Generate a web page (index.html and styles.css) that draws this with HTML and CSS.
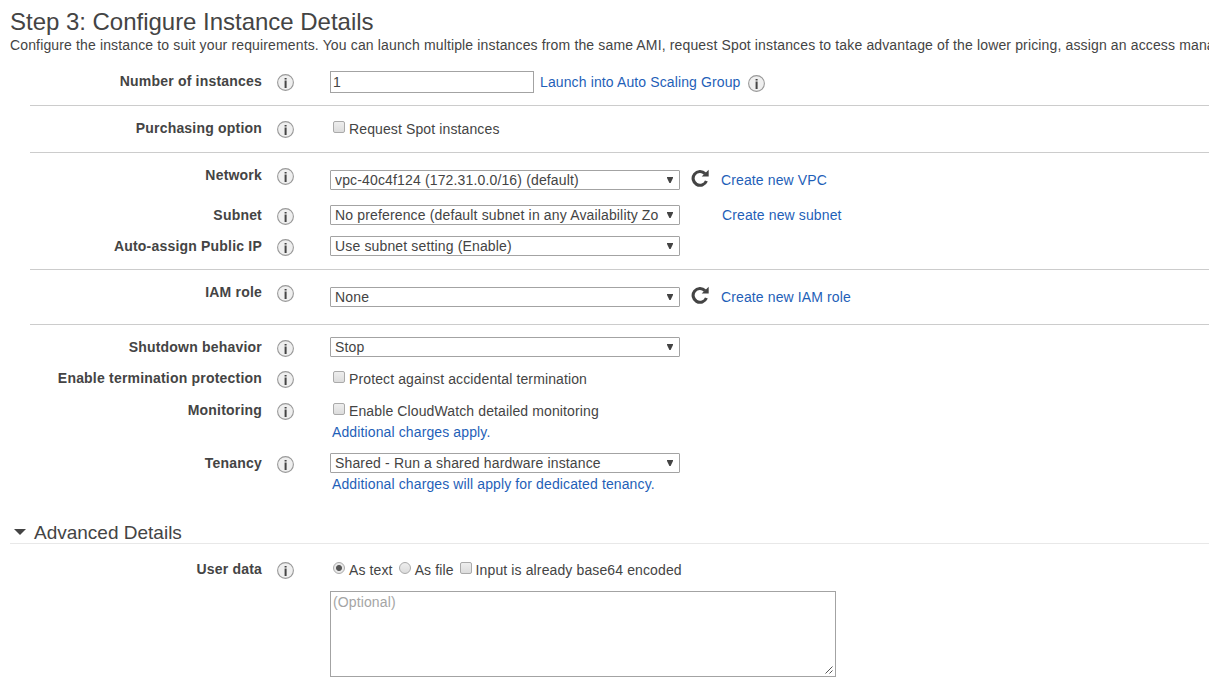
FILE: index.html
```
<!DOCTYPE html>
<html lang="en">
<head>
<meta charset="utf-8">
<title>Step 3: Configure Instance Details</title>
<link rel="stylesheet" href="styles.css">
</head>
<body>
<svg class="defs" width="0" height="0">
  <defs>
    <symbol id="info" viewBox="0 0 17 17"><circle cx="8.5" cy="8.5" r="7.9" fill="#efefef" stroke="#999" stroke-width="1.1"/><path d="M7.6 4h2v1.6h-2zM7.6 6.6h2V14h-2z" fill="#444"/></symbol>
    <symbol id="refresh" viewBox="0 0 18 18"><path d="M14 4.6A6.9 6.9 0 1 0 15.4 12" fill="none" stroke="#444" stroke-width="3.1"/><path d="M17.7 .8v6.7h-7z" fill="#444"/></symbol>
    <symbol id="arrow" viewBox="0 0 6 6"><path d="M0 0h6v1L3.6 6H2.4L0 1z" fill="#444"/></symbol>
  </defs>
</svg>
<main class="page">
  <h1 class="title">Step 3: Configure Instance Details</h1>
  <p class="intro">Configure the instance to suit your requirements. You can launch multiple instances from the same AMI, request Spot instances to take advantage of the lower pricing, assign an access mana</p>

  <section class="group">
    <div class="row h35">
      <div class="label">Number of instances</div><svg class="info"><use href="#info"/></svg>
      <div class="control line tight"><input class="number" type="text" value="1"><a class="link launch">Launch into Auto Scaling Group</a><svg class="info low"><use href="#info"/></svg></div>
    </div>
  </section>
  <section class="group">
    <div class="row h35">
      <div class="label">Purchasing option</div><svg class="info"><use href="#info"/></svg>
      <label class="control check"><input type="checkbox" class="box">Request Spot instances</label>
    </div>
  </section>
  <section class="group">
    <div class="row h40">
      <div class="label">Network</div><svg class="info"><use href="#info"/></svg>
      <div class="control line lowered"><div class="select"><span class="value">vpc-40c4f124 (172.31.0.0/16) (default)</span><svg class="arrow"><use href="#arrow"/></svg></div><svg class="refresh"><use href="#refresh"/></svg><a class="link">Create new VPC</a></div>
    </div>
    <div class="row h31">
      <div class="label">Subnet</div><svg class="info"><use href="#info"/></svg>
      <div class="control line"><div class="select"><span class="value">No preference (default subnet in any Availability Zo</span><svg class="arrow"><use href="#arrow"/></svg></div><a class="link subnet">Create new subnet</a></div>
    </div>
    <div class="row h34">
      <div class="label">Auto-assign Public IP</div><svg class="info"><use href="#info"/></svg>
      <div class="control line"><div class="select"><span class="value">Use subnet setting (Enable)</span><svg class="arrow"><use href="#arrow"/></svg></div></div>
    </div>
  </section>
  <section class="group">
    <div class="row h43">
      <div class="label">IAM role</div><svg class="info"><use href="#info"/></svg>
      <div class="control line lowered"><div class="select"><span class="value">None</span><svg class="arrow"><use href="#arrow"/></svg></div><svg class="refresh"><use href="#refresh"/></svg><a class="link">Create new IAM role</a></div>
    </div>
  </section>
  <section class="group last">
    <div class="row h31">
      <div class="label">Shutdown behavior</div><svg class="info"><use href="#info"/></svg>
      <div class="control line"><div class="select"><span class="value">Stop</span><svg class="arrow"><use href="#arrow"/></svg></div></div>
    </div>
    <div class="row h32">
      <div class="label">Enable termination protection</div><svg class="info"><use href="#info"/></svg>
      <label class="control check"><input type="checkbox" class="box">Protect against accidental termination</label>
    </div>
    <div class="row h53">
      <div class="label">Monitoring</div><svg class="info"><use href="#info"/></svg>
      <div class="control"><label class="check"><input type="checkbox" class="box">Enable CloudWatch detailed monitoring</label><a class="link note">Additional charges apply.</a></div>
    </div>
    <div class="row h53">
      <div class="label">Tenancy</div><svg class="info"><use href="#info"/></svg>
      <div class="control"><div class="line"><div class="select"><span class="value">Shared - Run a shared hardware instance</span><svg class="arrow"><use href="#arrow"/></svg></div></div><a class="link note">Additional charges will apply for dedicated tenancy.</a></div>
    </div>
  </section>

  <h2 class="advanced"><svg class="caret" viewBox="0 0 12 6"><path d="M0 0h12L6 6z" fill="#444"/></svg><span>Advanced Details</span></h2>
  <section class="group last">
    <div class="row">
      <div class="label">User data</div><svg class="info"><use href="#info"/></svg>
      <div class="control">
        <div class="options">
          <label class="check"><input type="radio" name="mode" class="box radio" checked>As text</label>
          <label class="check"><input type="radio" name="mode" class="box radio">As file</label>
          <label class="check"><input type="checkbox" class="box">Input is already base64 encoded</label>
        </div>
        <div class="userdata"><span>(Optional)</span><svg class="grip" viewBox="0 0 8 8"><path d="M.5 7.5l7-7M4.5 7.5l3-3" stroke="#555" fill="none"/></svg></div>
      </div>
    </div>
  </section>
</main>
</body>
</html>
```
FILE: styles.css
```
* { box-sizing: border-box; }
body { margin: 0; background: #fff; color: #444; font: 14px/16px "Liberation Sans", Arial, sans-serif; letter-spacing: .12px; overflow: hidden; }
.defs { position: absolute; }
.page { height: 693px; overflow: hidden; padding: 8px 0 0 10px; }
.title { margin: 0; height: 29px; font-size: 24px; line-height: 28px; font-weight: 400; letter-spacing: -.02px; }
.intro { margin: 0; height: 22px; white-space: nowrap; line-height: 16px; letter-spacing: .142px; }
.group { margin-left: 20px; padding-top: 11px; border-bottom: 1px solid #ccc; }
.group.last { border-bottom: 0; }
.row { display: grid; grid-template-columns: 232px 17px 1fr; column-gap: 15px; align-items: start; }
.h31 { height: 31px; }
.h32 { height: 32px; }
.h34 { height: 34px; }
.h35 { height: 35px; }
.h40 { height: 40px; }
.h43 { height: 43px; }
.h53 { height: 53px; }
.label { padding-top: 3px; text-align: right; font-weight: 700; letter-spacing: .2px; white-space: nowrap; }
.info { width: 17px; height: 17px; margin-top: 4px; flex: none; }
.control { margin-left: 21px; white-space: nowrap; }
.line { display: flex; align-items: center; height: 20px; margin-top: 1px; }
.line.lowered { margin-top: 6px; }
.line.tight { height: 22px; }
.info.low { margin: 3px 0 0 7px; }
.number { width: 204px; height: 22px; padding: 0 2px; border: 1px solid #a3a3a3; color: #444; font: inherit; outline: 0; }
.link { color: #1f5fb8; }
.launch { margin-left: 6px; }
.select { display: flex; align-items: center; width: 350px; height: 20px; padding: 0 6px 0 4px; border: 1px solid #a3a3a3; border-radius: 1px; background: #fff; }
.value { flex: 1; overflow: hidden; letter-spacing: .15px; }
.arrow { width: 6px; height: 6px; }
.refresh { width: 18px; height: 18px; margin: -4px 12px 0 11px; }
.subnet { margin-left: 42px; }
.check { display: flex; align-items: center; height: 16px; margin-top: 4px; }
.box { appearance: none; width: 12px; height: 12px; margin: -4px 4px 0 3px; border: 1px solid #aaa; border-radius: 2px; background: linear-gradient(#eee, #dcdcdc); flex: none; }
.radio { border-radius: 50%; }
.radio:checked { background: radial-gradient(circle, #555 0 2.5px, #e8e8e8 3.5px); }
.note { display: block; margin: 5px 0 0 2px; }
.line + .note { margin-top: 3px; }
.advanced { display: flex; align-items: center; height: 23px; margin: 16px 0 0; padding-left: 4px; border-bottom: 1px solid #e8e8e8; font-size: 19px; line-height: 22px; font-weight: 400; letter-spacing: 0; }
.advanced span { padding-top: 2px; }
.caret { width: 12px; height: 6px; margin-right: 8px; }
.advanced + .group { padding-top: 14px; }
.options { display: flex; gap: 3px; }
.userdata { display: flex; justify-content: space-between; width: 506px; height: 86px; margin-top: 13px; padding: 2px; border: 1px solid #a3a3a3; color: #a5a5a5; }
.grip { width: 8px; height: 8px; align-self: flex-end; }
```
